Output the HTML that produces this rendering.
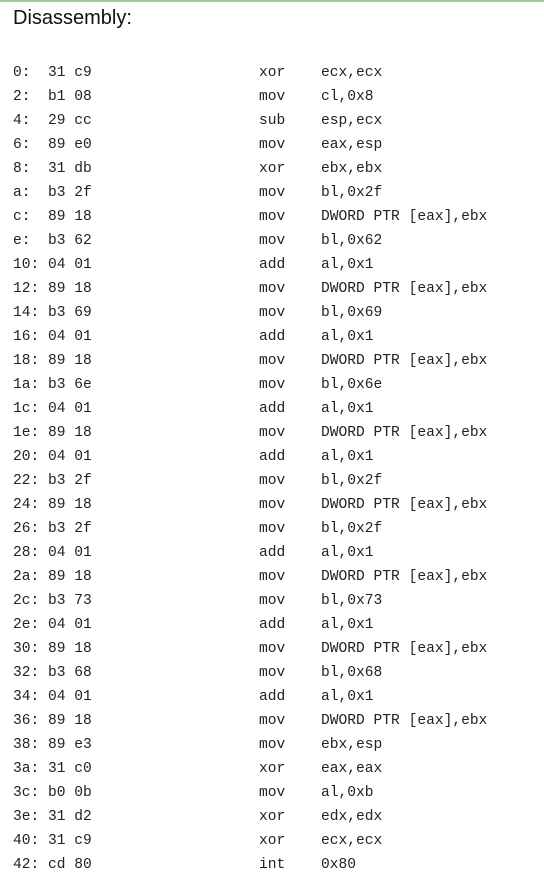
<!DOCTYPE html>
<html><head><meta charset="utf-8"><style>
html,body{margin:0;padding:0;background:#fff;width:544px;height:873px;overflow:hidden;position:relative}
.top{position:absolute;left:0;top:0;width:544px;height:2px;background:#a8c8a0}
h1{position:absolute;left:13px;top:7px;margin:0;font:20px "Liberation Sans",sans-serif;color:#111}
.r{position:absolute;left:0;width:544px;height:20px;font:14.6px "Liberation Mono",monospace;color:#222;white-space:pre}
.r span{position:absolute;top:0}
.a{left:13px}.b{left:48px}.m{left:259px}.o{left:321px}
</style></head><body>
<div class="top"></div>
<h1>Disassembly:</h1>
<div id="c"></div>
<script>
var d=[["0:","31 c9","xor","ecx,ecx"],["2:","b1 08","mov","cl,0x8"],["4:","29 cc","sub","esp,ecx"],["6:","89 e0","mov","eax,esp"],["8:","31 db","xor","ebx,ebx"],["a:","b3 2f","mov","bl,0x2f"],["c:","89 18","mov","DWORD PTR [eax],ebx"],["e:","b3 62","mov","bl,0x62"],["10:","04 01","add","al,0x1"],["12:","89 18","mov","DWORD PTR [eax],ebx"],["14:","b3 69","mov","bl,0x69"],["16:","04 01","add","al,0x1"],["18:","89 18","mov","DWORD PTR [eax],ebx"],["1a:","b3 6e","mov","bl,0x6e"],["1c:","04 01","add","al,0x1"],["1e:","89 18","mov","DWORD PTR [eax],ebx"],["20:","04 01","add","al,0x1"],["22:","b3 2f","mov","bl,0x2f"],["24:","89 18","mov","DWORD PTR [eax],ebx"],["26:","b3 2f","mov","bl,0x2f"],["28:","04 01","add","al,0x1"],["2a:","89 18","mov","DWORD PTR [eax],ebx"],["2c:","b3 73","mov","bl,0x73"],["2e:","04 01","add","al,0x1"],["30:","89 18","mov","DWORD PTR [eax],ebx"],["32:","b3 68","mov","bl,0x68"],["34:","04 01","add","al,0x1"],["36:","89 18","mov","DWORD PTR [eax],ebx"],["38:","89 e3","mov","ebx,esp"],["3a:","31 c0","xor","eax,eax"],["3c:","b0 0b","mov","al,0xb"],["3e:","31 d2","xor","edx,edx"],["40:","31 c9","xor","ecx,ecx"],["42:","cd 80","int","0x80"]];
var h="";d.forEach(function(r,i){h+='<div class="r" style="top:'+(65+i*24)+'px"><span class="a">'+r[0]+'</span><span class="b">'+r[1]+'</span><span class="m">'+r[2]+'</span><span class="o">'+r[3]+'</span></div>';});
document.getElementById("c").innerHTML=h;
</script>
</body></html>
